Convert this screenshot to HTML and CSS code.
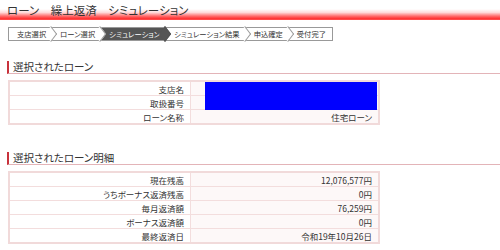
FILE: index.html
```html
<!DOCTYPE html>
<html lang="ja">
<head>
<meta charset="utf-8">
<title>ローン 繰上返済 シミュレーション</title>
<link rel="stylesheet" href="styles.css">
</head>
<body>
<div class="page">
  <h1 class="title">ローン　繰上返済　シミュレーション</h1>
  <ol class="steps">
    <li class="step">支店選択</li>
    <li class="step">ローン選択</li>
    <li class="step active">シミュレーション</li>
    <li class="step">シミュレーション結果</li>
    <li class="step">申込確定</li>
    <li class="step last">受付完了</li>
  </ol>

  <section class="section first">
    <h2 class="heading">選択されたローン</h2>
    <div class="table-wrap">
      <table class="info">
        <tr><th>支店名</th><td></td></tr>
        <tr><th>取扱番号</th><td></td></tr>
        <tr><th>ローン名称</th><td>住宅ローン</td></tr>
      </table>
      <div class="mask"></div>
    </div>
  </section>

  <section class="section second">
    <h2 class="heading">選択されたローン明細</h2>
    <div class="table-wrap">
      <table class="info">
        <tr><th>現在残高</th><td>12,076,577円</td></tr>
        <tr><th>うちボーナス返済残高</th><td>0円</td></tr>
        <tr><th>毎月返済額</th><td>76,259円</td></tr>
        <tr><th>ボーナス返済額</th><td>0円</td></tr>
        <tr><th>最終返済日</th><td>令和19年10月26日</td></tr>
      </table>
    </div>
  </section>
</div>
</body>
</html>
```

FILE: styles.css
```css
html, body {
  margin: 0;
  padding: 0;
  background: #fff;
}
body {
  font-family: "Noto Sans CJK JP", "Noto Sans", sans-serif;
  color: #333;
  font-feature-settings: "palt";
  line-height: 1.2;
}
.page {
  width: 500px;
}
.title {
  margin: 0;
  padding: 3px 0 0 7px;
  height: 17px;
  font-size: 11.5px;
  line-height: 15px;
  font-weight: normal;
  color: #333;
  background: linear-gradient(to bottom, rgba(255,255,255,0) 45%, #ffdcdc 62%, #ff7070 80%, #ff3535 92%, #ff5050 100%);
}
.steps {
  list-style: none;
  margin: 7px 0 0 8px;
  padding: 0;
  display: flex;
  width: fit-content;
  border: 1px solid #999;
  height: 12px;
  background: #fff;
}
.step {
  position: relative;
  font-size: 7.3px;
  line-height: 12px;
  padding: 0 5px 0 6px;
  color: #333;
  white-space: nowrap;
}
.step:first-child {
  padding-left: 8px;
}
.step::after {
  content: "";
  position: absolute;
  top: 1px;
  right: -5px;
  width: 9px;
  height: 9px;
  background: #fff;
  border-top: 1px solid #999;
  border-right: 1px solid #999;
  transform: rotate(45deg) skew(8deg, 8deg);
  z-index: 1;
}
.step + .step {
  padding-left: 9px;
}
.step.last::after {
  display: none;
}
.step.last {
  padding-right: 6px;
}
.step.active {
  background: #555;
  color: #fff;
}
.step.active::after {
  background: #555;
  border-color: #555;
}
.section {
  margin-left: 7px;
}
.section.first {
  margin-top: 20px;
}
.section.second {
  margin-top: 27px;
}
.heading {
  margin: 0;
  font-size: 10.5px;
  line-height: 12px;
  font-weight: normal;
  color: #333;
  padding: 0 0 0 4px;
  border-left: 2px solid #c8323c;
  border-bottom: 1px solid #e3b4b8;
}
.table-wrap {
  position: relative;
  margin-top: 6px;
  margin-left: 1px;
  width: 372px;
}
.info {
  border-collapse: collapse;
  width: 372px;
  border: 2px solid #f1dada;
}
.info th, .info td {
  border: 1px solid #f3dddd;
  height: 13px;
  padding: 0 6px;
  font-size: 8.5px;
  line-height: 12px;
  font-weight: normal;
  text-align: right;
  color: #333;
}
.info th {
  width: 168px;
  background: #fff;
}
.info td {
  background: #fdf8f8;
}
.mask {
  position: absolute;
  left: 197px;
  top: 2px;
  width: 172px;
  height: 28px;
  background: #0000ff;
}
```
